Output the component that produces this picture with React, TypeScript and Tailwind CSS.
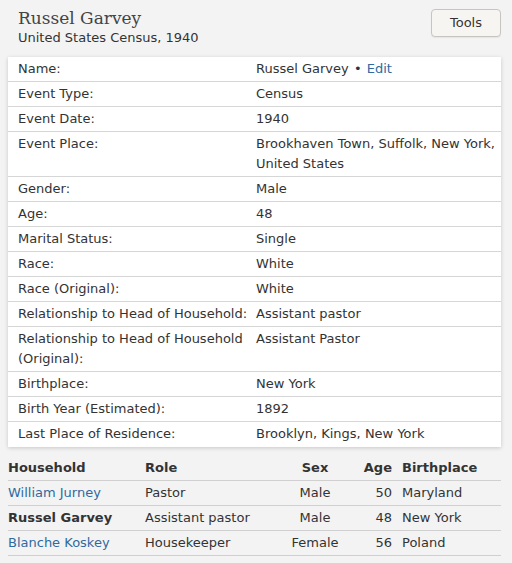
import React from "react"

type Fact = { label: string; value: React.ReactNode }

const facts: Fact[] = [
  {
    label: "Name:",
    value: (
      <>
        Russel Garvey <span className="mx-[1px]">•</span> <a className="text-[#2f6aa0]">Edit</a>
      </>
    ),
  },
  { label: "Event Type:", value: "Census" },
  { label: "Event Date:", value: "1940" },
  { label: "Event Place:", value: "Brookhaven Town, Suffolk, New York, United States" },
  { label: "Gender:", value: "Male" },
  { label: "Age:", value: "48" },
  { label: "Marital Status:", value: "Single" },
  { label: "Race:", value: "White" },
  { label: "Race (Original):", value: "White" },
  { label: "Relationship to Head of Household:", value: "Assistant pastor" },
  { label: "Relationship to Head of Household (Original):", value: "Assistant Pastor" },
  { label: "Birthplace:", value: "New York" },
  { label: "Birth Year (Estimated):", value: "1892" },
  { label: "Last Place of Residence:", value: "Brooklyn, Kings, New York" },
]

const household = [
  { name: "William Jurney", role: "Pastor", sex: "Male", age: "50", place: "Maryland", self: false },
  { name: "Russel Garvey", role: "Assistant pastor", sex: "Male", age: "48", place: "New York", self: true },
  { name: "Blanche Koskey", role: "Housekeeper", sex: "Female", age: "56", place: "Poland", self: false },
]

export default function App() {
  return (
    <div className="w-[512px] h-[563px] bg-[#f3f3f3] text-[#333] text-[13px] leading-[20px] font-['DejaVu_Sans',Verdana,sans-serif] overflow-hidden">
      <div className="flex justify-between pl-[18px] pr-[11px] pt-[6px] h-[57px]">
        <div>
          <h1 className="font-['DejaVu_Serif',serif] text-[17px] leading-[24px] text-[#444]">Russel Garvey</h1>
          <div className="leading-[16px] text-[#333]">United States Census, 1940</div>
        </div>
        <button className="mt-[3px] w-[70px] h-[28px] rounded-[4px] border border-[#c8c5c0] bg-[#f7f5f2] text-[#333] shadow-[0_1px_1px_rgba(0,0,0,0.06)]">
          Tools
        </button>
      </div>

      <div className="mx-[8px] w-[493px] bg-white shadow-[0_1px_4px_rgba(0,0,0,0.18)]">
        {facts.map((f, i) => (
          <div
            key={f.label}
            className={`flex pt-[2px] pb-[2px] ${i < facts.length - 1 ? "border-b border-[#d6d6d6]" : "pb-[3px]"}`}
          >
            <div className="w-[248px] pl-[10px] pr-[8px] shrink-0">{f.label}</div>
            <div className="flex-1 pr-[6px]">{f.value}</div>
          </div>
        ))}
      </div>

      <table className="mx-[8px] mt-[9px] w-[493px] border-collapse">
        <thead>
          <tr className="border-b border-[#d0d0d0] font-bold">
            <th className="text-left font-bold pt-[2px] pb-[2px] w-[137px]">Household</th>
            <th className="text-left font-bold w-[135px]">Role</th>
            <th className="text-center font-bold w-[70px]">Sex</th>
            <th className="text-right font-bold w-[42px]">Age</th>
            <th className="text-left font-bold pl-[10px]">Birthplace</th>
          </tr>
        </thead>
        <tbody>
          {household.map((h) => (
            <tr key={h.name} className="border-b border-[#d0d0d0]">
              <td className={`pt-[2px] pb-[2px] ${h.self ? "font-bold" : "text-[#2f6aa0]"}`}>{h.name}</td>
              <td>{h.role}</td>
              <td className="text-center">{h.sex}</td>
              <td className="text-right">{h.age}</td>
              <td className="pl-[10px]">{h.place}</td>
            </tr>
          ))}
        </tbody>
      </table>
    </div>
  )
}
